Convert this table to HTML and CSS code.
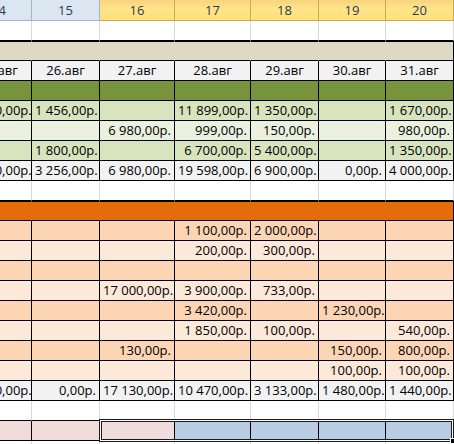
FILE: index.html
```html
<!DOCTYPE html>
<html lang="ru">
<head>
    <meta charset="UTF-8">
    <meta name="viewport" content="width=device-width, initial-scale=1.0">
    <title>Расходы по дням</title>
    <link rel="stylesheet" href="styles.css">
</head>
<body>
    <div class="sheet">
        <div class="row head">
            <div class="cell">14</div><div class="cell">15</div><div class="cell sel">16</div><div class="cell sel">17</div><div class="cell sel">18</div><div class="cell sel">19</div><div class="cell sel">20</div>
        </div>
        <div class="row blank">
            <div class="cell"></div><div class="cell"></div><div class="cell"></div><div class="cell"></div><div class="cell"></div><div class="cell"></div><div class="cell"></div>
        </div>
        <div class="row band tan">
            <div class="cell"></div><div class="cell"></div><div class="cell"></div><div class="cell"></div><div class="cell"></div><div class="cell"></div><div class="cell"></div>
        </div>
        <div class="row dates">
            <div class="cell">25.авг</div><div class="cell">26.авг</div><div class="cell">27.авг</div><div class="cell">28.авг</div><div class="cell">29.авг</div><div class="cell">30.авг</div><div class="cell">31.авг</div>
        </div>
        <div class="row olive">
            <div class="cell"></div><div class="cell"></div><div class="cell"></div><div class="cell"></div><div class="cell"></div><div class="cell"></div><div class="cell"></div>
        </div>
        <div class="row g1">
            <div class="cell">2 150,00р.</div><div class="cell">1 456,00р.</div><div class="cell"></div><div class="cell">11 899,00р.</div><div class="cell">1 350,00р.</div><div class="cell"></div><div class="cell">1 670,00р.</div>
        </div>
        <div class="row g2">
            <div class="cell"></div><div class="cell"></div><div class="cell">6 980,00р.</div><div class="cell">999,00р.</div><div class="cell">150,00р.</div><div class="cell"></div><div class="cell">980,00р.</div>
        </div>
        <div class="row g1">
            <div class="cell"></div><div class="cell">1 800,00р.</div><div class="cell"></div><div class="cell">6 700,00р.</div><div class="cell">5 400,00р.</div><div class="cell"></div><div class="cell">1 350,00р.</div>
        </div>
        <div class="row total">
            <div class="cell">2 150,00р.</div><div class="cell">3 256,00р.</div><div class="cell">6 980,00р.</div><div class="cell">19 598,00р.</div><div class="cell">6 900,00р.</div><div class="cell">0,00р.</div><div class="cell">4 000,00р.</div>
        </div>
        <div class="row blank">
            <div class="cell"></div><div class="cell"></div><div class="cell"></div><div class="cell"></div><div class="cell"></div><div class="cell"></div><div class="cell"></div>
        </div>
        <div class="row band orange">
            <div class="cell"></div><div class="cell"></div><div class="cell"></div><div class="cell"></div><div class="cell"></div><div class="cell"></div><div class="cell"></div>
        </div>
        <div class="row p1">
            <div class="cell"></div><div class="cell"></div><div class="cell"></div><div class="cell">1 100,00р.</div><div class="cell">2 000,00р.</div><div class="cell"></div><div class="cell"></div>
        </div>
        <div class="row p2">
            <div class="cell"></div><div class="cell"></div><div class="cell"></div><div class="cell">200,00р.</div><div class="cell">300,00р.</div><div class="cell"></div><div class="cell"></div>
        </div>
        <div class="row p1">
            <div class="cell"></div><div class="cell"></div><div class="cell"></div><div class="cell"></div><div class="cell"></div><div class="cell"></div><div class="cell"></div>
        </div>
        <div class="row p2">
            <div class="cell"></div><div class="cell"></div><div class="cell">17 000,00р.</div><div class="cell">3 900,00р.</div><div class="cell">733,00р.</div><div class="cell"></div><div class="cell"></div>
        </div>
        <div class="row p1">
            <div class="cell"></div><div class="cell"></div><div class="cell"></div><div class="cell">3 420,00р.</div><div class="cell"></div><div class="cell">1 230,00р.</div><div class="cell"></div>
        </div>
        <div class="row p2">
            <div class="cell"></div><div class="cell"></div><div class="cell"></div><div class="cell">1 850,00р.</div><div class="cell">100,00р.</div><div class="cell"></div><div class="cell">540,00р.</div>
        </div>
        <div class="row p1">
            <div class="cell"></div><div class="cell"></div><div class="cell">130,00р.</div><div class="cell"></div><div class="cell"></div><div class="cell">150,00р.</div><div class="cell">800,00р.</div>
        </div>
        <div class="row p2">
            <div class="cell"></div><div class="cell"></div><div class="cell"></div><div class="cell"></div><div class="cell"></div><div class="cell">100,00р.</div><div class="cell">100,00р.</div>
        </div>
        <div class="row total">
            <div class="cell">1 250,00р.</div><div class="cell">0,00р.</div><div class="cell">17 130,00р.</div><div class="cell">10 470,00р.</div><div class="cell">3 133,00р.</div><div class="cell">1 480,00р.</div><div class="cell">1 440,00р.</div>
        </div>
        <div class="row blank">
            <div class="cell"></div><div class="cell"></div><div class="cell"></div><div class="cell"></div><div class="cell"></div><div class="cell"></div><div class="cell"></div>
        </div>
        <div class="row mark">
            <div class="cell pink"></div><div class="cell pink"></div><div class="cell pink"></div><div class="cell blue"></div><div class="cell blue"></div><div class="cell blue"></div><div class="cell blue"></div>
        </div>
        <div class="row blank">
            <div class="cell"></div><div class="cell"></div><div class="cell"></div><div class="cell"></div><div class="cell"></div><div class="cell"></div><div class="cell"></div>
        </div>

        <div class="selection"><span class="handle"></span></div>
    </div>
</body>
</html>
```

FILE: styles.css
```css
body {
    margin: 0;
    overflow: hidden;
    background: #fff;
    font-family: "Open Sans", "Liberation Sans", sans-serif;
    font-size: 13px;
    color: #000;
}
.sheet {
    position: relative;
    display: grid;
    grid-template-columns: 66px 68px 75px 76px 68px 67px 68px;
    grid-template-rows: 21px;
    grid-auto-rows: 20px;
    width: 488px;
    margin-left: -34px;
}
.row {
    display: contents;
}
.cell {
    box-sizing: border-box;
    border-right: 1px solid #000;
    border-bottom: 1px solid #000;
    padding: 0 3px;
    line-height: 19px;
    text-align: right;
    white-space: nowrap;
    overflow: hidden;
}

/* column headers */
.head .cell {
    background: #dce6f1;
    border-color: #9eb6ce;
    line-height: 20px;
    text-align: center;
    color: #243c58;
}
.head .cell.sel {
    background: linear-gradient(#f8d47e, #ffe48a 45%, #ffe17a);
    border-color: #d4a54a;
}

.blank .cell {
    border-right-color: #d9d9d9;
}

/* merged colour bands */
.band .cell {
    border-top: 1px solid #000;
}
.tan .cell {
    background: #ddd9c4;
    border-right-color: #ddd9c4;
}
.orange .cell {
    background: #e46c0a;
    border-right-color: #e46c0a;
}
.band .cell:last-child {
    border-right-color: #000;
}

.dates .cell {
    background: #f2f2f2;
    text-align: center;
}
.olive .cell { background: #77933c; }
.g1 .cell { background: #d7e4bd; }
.g2 .cell { background: #ebf1de; }
.p1 .cell { background: #fcd5b4; }
.p2 .cell { background: #fde9d9; }
.total .cell { background: #f2f2f2; }
.mark .pink { background: #f2dcdb; }
.mark .blue { background: #b8cce4; }

.selection {
    position: absolute;
    left: 133px;
    top: 419px;
    width: 355px;
    height: 23px;
    box-sizing: border-box;
    border: 1px solid #1b1b1b;
    box-shadow: inset 0 0 0 1px #fff, inset 0 0 0 2px #1b1b1b;
}
.handle {
    position: absolute;
    right: -3px;
    bottom: -3px;
    width: 4px;
    height: 4px;
    background: #000;
    border: 1px solid #fff;
}
```
